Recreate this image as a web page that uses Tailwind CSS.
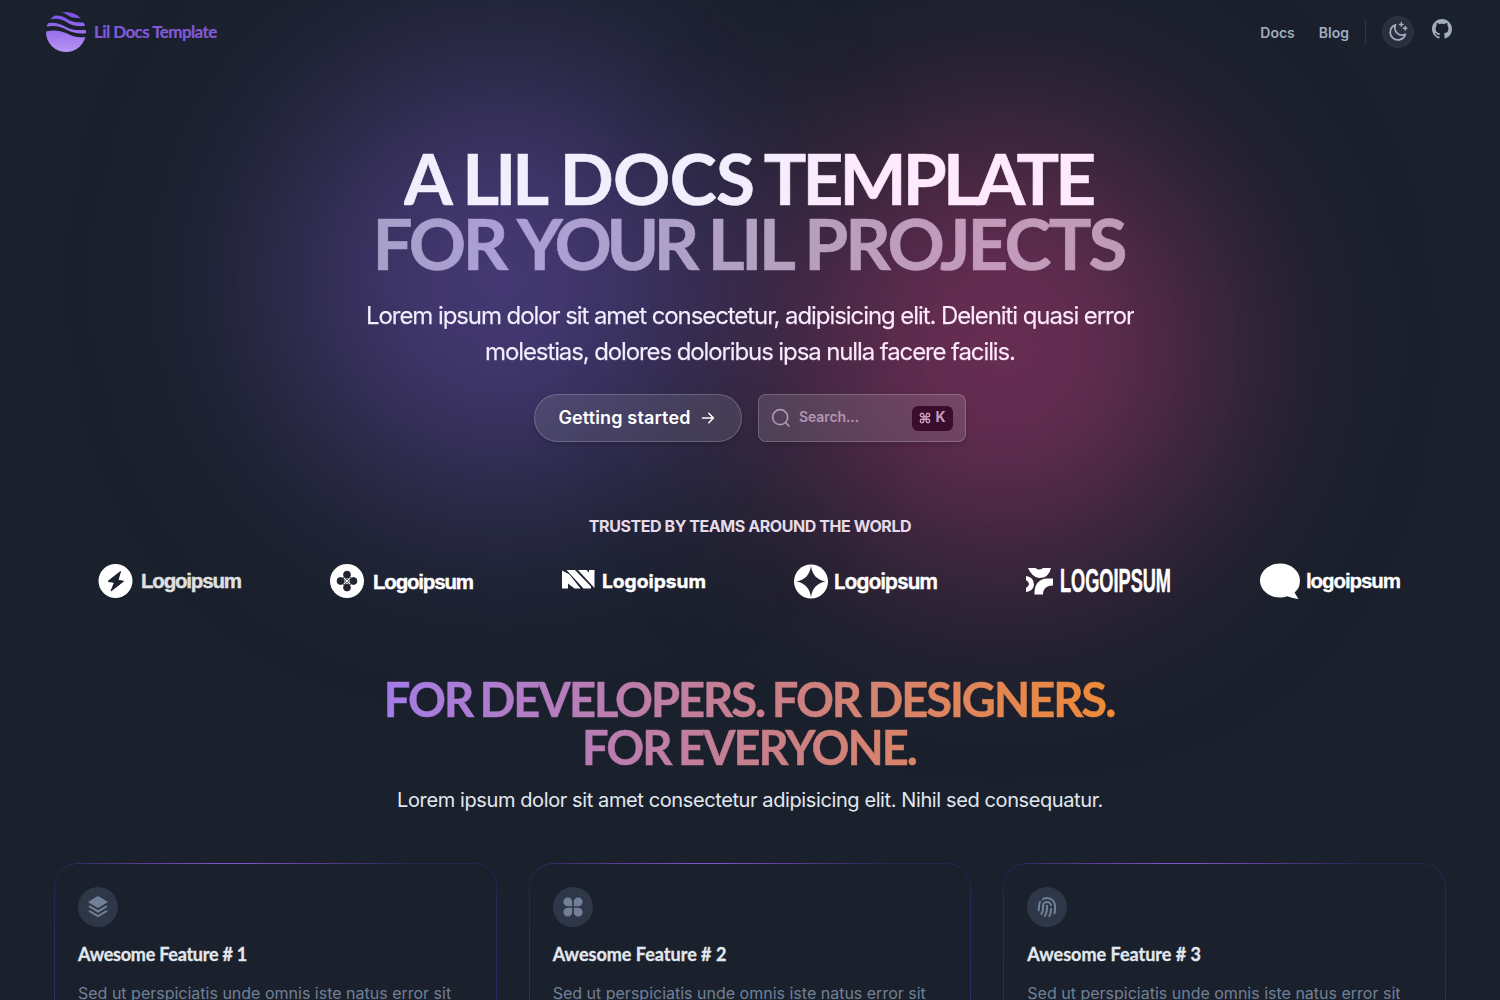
<!DOCTYPE html>
<html lang="en">
<head>
<meta charset="utf-8">
<title>Lil Docs Template</title>
<script src="https://cdn.jsdelivr.net/npm/@tailwindcss/browser@4"></script>
</head>
<body class="h-[1000px] overflow-hidden bg-[#1a202c] font-[Inter,sans-serif] text-[#e2e8f0]">
<div class="relative h-[1000px] overflow-hidden">
  <div class="absolute left-[285px] top-[65px] size-[430px] rounded-full bg-[#805ad5]/44 blur-[102px]"></div>
  <div class="absolute left-[788px] top-[133px] size-[430px] rounded-full bg-[#d53f8c]/44 blur-[102px]"></div>

  <div class="relative flex flex-col">
    <header class="flex h-16 items-center justify-between pl-[46px] pr-12">
      <a class="flex items-center gap-2">
        <svg class="size-10" viewBox="0 0 40 40">
          <defs>
            <linearGradient id="brand" x1="0" y1="0" x2="0" y2="1" gradientUnits="objectBoundingBox"><stop offset="0" stop-color="#7c50e6"/><stop offset="1" stop-color="#b794f4"/></linearGradient>
            <mask id="waves">
              <path fill="#fff" d="M15 .5C20 1 22 4.500 27 5.500Q30 6.300 36 6.300V-2H15z"/>
              <path fill="#fff" d="M3 4.300C12 2.500 17 4 22 7.500C27 10.500 32 10.500 40 10.500V14C32 14.500 27 14 22 11C17 7.500 12 5.500 3 7.500z"/>
              <path fill="#fff" d="M0 11.500C9 9.500 14 12 20 15C26 18.500 32 18.200 40 18V21.200C32 21.800 27 21 21 18C14 14.500 9 13 0 14.800z"/>
              <path fill="#fff" d="M0 19.500C8 17.500 14 18.500 20.700 21.300C27 24.500 32 26 40 25V40H0z"/>
            </mask>
          </defs>
          <circle cx="20" cy="20" r="20" fill="url(#brand)" mask="url(#waves)"/>
        </svg>
        <span class="whitespace-nowrap font-[Lato] text-[17px] font-bold tracking-[-0.58px] text-[#805ad5] [-webkit-text-stroke:0.2px_currentColor]">Lil Docs Template</span>
      </a>
      <nav class="flex items-center text-sm font-semibold text-[#a0aec0]">
        <a class="mr-6 mt-0.5">Docs</a>
        <a class="mr-4 mt-0.5">Blog</a>
        <span class="mr-4 h-6 w-px bg-[#2d3748]"></span>
        <button class="mr-[18px] flex size-8 items-center justify-center rounded-full border border-[#2d3748] bg-[#2b2f3d]">
          <svg class="size-5 shrink-0" viewBox="0 0 20 20" fill="none" stroke="#a0aec0" stroke-width="1.700" stroke-linecap="round" stroke-linejoin="round"><path d="M7.500 2.900A7.700 7.700 0 1 0 17.400 12.200A7.200 7.200 0 0 1 7.500 2.900z"/><path stroke-width="1.500" d="M13.300 .8v3.400M11.600 2.500h3.400M17.200 4.600v3.400M15.500 6.300h3.400"/></svg>
        </button>
        <svg class="-mt-1.5 size-5" viewBox="0 0 16 16" fill="#a0aec0"><path d="M8 0C3.580 0 0 3.580 0 8c0 3.540 2.290 6.530 5.470 7.590.4.070.55-.17.55-.38 0-.19-.01-.82-.01-1.490-2.010.37-2.530-.49-2.690-.94-.09-.23-.48-.94-.82-1.130-.28-.15-.68-.52-.01-.53.63-.01 1.080.58 1.230.82.72 1.210 1.870.87 2.330.66.07-.52.28-.87.51-1.070-1.780-.2-3.640-.89-3.640-3.950 0-.87.31-1.590.82-2.150-.08-.2-.36-1.020.08-2.120 0 0 .67-.21 2.200.82.64-.18 1.320-.27 2-.27s1.360.09 2 .27c1.530-1.040 2.200-.82 2.200-.82.44 1.100.16 1.920.08 2.120.51.56.82 1.270.82 2.150 0 3.070-1.870 3.750-3.650 3.950.29.25.54.73.54 1.480 0 1.070-.01 1.930-.01 2.200 0 .21.15.46.55.38A8.010 8.010 0 0 0 16 8c0-4.420-3.580-8-8-8z"/></svg>
      </nav>
    </header>

    <section class="flex flex-col items-center pt-[81px]">
      <h1 class="flex flex-col items-center whitespace-nowrap font-[Lato] text-[71px] font-bold leading-[65px] [-webkit-text-stroke:0.7px_transparent]">
        <span class="bg-[linear-gradient(90deg,#f3eefe_0%,#f3eefe_50%,#ffe9fd_66%)] bg-clip-text pr-[4px] tracking-[-2.74px] text-transparent">A <span class="tracking-[-4px]">LIL</span> <span class="tracking-[-0.7px]">DOCS</span> <span class="-ml-[5px] tracking-[-3.8px]">TEMPLATE</span></span>
        <span class="bg-[linear-gradient(90deg,#a8a0c8_0%,#ab9fd6_17%,#ada0cc_35%,#b3a1bf_52%,#c49abb_80%,#bf9bb8_100%)] bg-clip-text pr-[3px] tracking-[-3.4px] text-transparent">FOR <span class="-ml-0.5 tracking-[-5.4px]">YOUR</span> LIL <span class="tracking-[-2.8px]">PROJECTS</span></span>
      </h1>
      <p class="mt-[23px] flex flex-col items-center whitespace-nowrap bg-[linear-gradient(90deg,#f3eefe_45%,#ffe9fd_66%)] bg-clip-text text-2xl leading-9 tracking-[-1.08px] text-transparent [-webkit-text-stroke:0.25px_transparent]">
        <span>Lorem ipsum dolor sit amet consectetur, adipisicing elit. Deleniti quasi error</span>
        <span class="tracking-[-1.11px]">molestias, dolores doloribus ipsa nulla facere facilis.</span>
      </p>
      <div class="mt-6 flex gap-4">
        <button class="flex h-12 w-52 items-center justify-center gap-[9px] rounded-full border border-white/20 bg-white/10 pr-0.5 text-lg font-semibold text-white shadow-md">
          <span class="tracking-[0.15px]">Getting started</span>
          <svg class="size-4" viewBox="0 0 16 16" fill="none" stroke="currentColor" stroke-width="1.500" stroke-linecap="round" stroke-linejoin="round"><path d="M2.500 8h11M8.800 3.300L13.500 8l-4.700 4.700"/></svg>
        </button>
        <button class="flex h-12 w-52 items-center rounded-lg border border-white/20 bg-white/12 pl-3 pr-3 text-sm font-semibold text-[#b595b3] shadow-md">
          <svg class="mr-2 size-5" viewBox="0 0 24 24" fill="none" stroke="currentColor" stroke-width="2" stroke-linecap="round"><circle cx="11" cy="11" r="9"/><path d="M18 18L21.500 21.500"/></svg>
          <span class="-mt-0.5 tracking-[-0.1px]">Search...</span>
          <kbd class="ml-auto flex h-[25px] w-[41px] items-center justify-center gap-1 rounded-md bg-[#3b0d2d] font-[Inter] text-sm font-bold text-[#c79dbd]">
            <svg class="size-3" viewBox="0 0 24 24" fill="none" stroke="currentColor" stroke-width="2.800"><path d="M18 2.500a3.500 3.500 0 0 0-3.500 3.500v12a3.500 3.500 0 1 0 3.500-3.500H6A3.500 3.500 0 1 0 9.500 18V6A3.500 3.500 0 1 0 6 9.500h12a3.500 3.500 0 1 0 0-7z"/></svg>
            <span class="-mt-0.5">K</span>
          </kbd>
        </button>
      </div>

      <p class="mt-[72px] text-base font-bold leading-6 tracking-[-0.43px] text-[#e6dce9]">TRUSTED BY TEAMS AROUND THE WORLD</p>
      <div class="ml-[98px] mt-[22px] grid grid-cols-[repeat(6,232px)] self-start font-bold">
        <svg class="h-10 w-[150px]" viewBox="0 0 150 40" fill="#fff"><circle cx="17.500" cy="21" r="17"/><path fill="#1c2130" stroke="#1c2130" stroke-width="1" stroke-linejoin="round" d="M22.500 11.500L10 21.300l6.500 1.200-3.500 8.500L25.500 21.300l-5.500-1.100z"/><text x="43" y="28" fill="#e0e0e0" stroke="#e0e0e0" stroke-width=".4" font-family="Liberation Sans, sans-serif" font-size="20.500" textLength="101">Logoipsum</text></svg>
        <svg class="h-10 w-[150px]" viewBox="0 0 150 40" fill="#fff"><circle cx="17" cy="21" r="17"/><g fill="#20222f" stroke="#20222f"><circle cx="17" cy="14.600" r="3.400"/><circle cx="17" cy="27.600" r="3.400"/><circle cx="10.500" cy="21" r="3.400"/><circle cx="23.500" cy="21" r="3.400"/></g><path d="M13.300 17.300l7.400 7.400M20.700 17.300l-7.400 7.400" stroke="#20222f" stroke-width="2.400"/><path d="M13.800 17.800l6.400 6.400M20.200 17.800l-6.400 6.400" stroke="#fff" stroke-width="1.200"/><text x="43" y="29" stroke="#fff" stroke-width=".4" font-family="Liberation Sans, sans-serif" font-size="20.500" textLength="101">Logoipsum</text></svg>
        <svg class="h-10 w-[150px]" viewBox="0 0 150 40" fill="#fff"><path d="M0 10.500L7.500 14.500 18.500 28.500H12.500L6 23.500V28.500H0zM4.500 10H13L29 26.500V28.500H21.500zM16 10H24.500L27 12.500V10H32.500V28z"/><text x="40" y="28" stroke="#fff" stroke-width=".4" font-family="Inter, sans-serif" font-size="18.500" textLength="104" lengthAdjust="spacingAndGlyphs">Logoipsum</text></svg>
        <svg class="h-10 w-[150px]" viewBox="0 0 150 40" fill="#fff"><circle cx="17" cy="21.500" r="17"/><path fill="#272435" d="M17 6C18.500 15 22.500 19.500 31.500 21.500 22.500 23.500 18.500 28 17 37 15.500 28 11.500 23.500 2.500 21.500 11.500 19.500 15.500 15 17 6z"/><text x="40" y="29" stroke="#fff" stroke-width=".5" font-family="Inter, sans-serif" font-size="20.500" textLength="104" font-weight="600">Logoipsum</text></svg>
        <svg class="h-10 w-[150px]" viewBox="0 0 150 40" fill="#fff"><path d="M2 8H9.500Q13 11 17 8H25Q23 18 13 18Q6 17 2 8zM0 16Q8 17 8 25Q7 31 0 32V28Q3 26 3 24T0 20zM8.500 34.500V31Q10 19 21 18.500H27V25.500H26Q17 26 17 34.500z"/><text x="34" y="32" stroke="#fff" stroke-width=".5" font-family="Liberation Sans, sans-serif" font-size="33" textLength="111" lengthAdjust="spacingAndGlyphs">LOGOIPSUM</text></svg>
        <svg class="ml-0.5 h-10 w-[150px]" viewBox="0 0 150 40" fill="#fff"><path d="M20 3.500C31 3.500 40 11 40 20.500C40 26 38 30 34.500 32.500L38.500 39Q31 38 27.500 36.300Q24 37.500 20 37.500C9 37.500 0 30 0 20.500S9 3.500 20 3.500z"/><text x="46" y="28" stroke="#fff" stroke-width=".3" font-family="Liberation Sans, sans-serif" font-size="20.500" textLength="95">logoipsum</text></svg>
      </div>
    </section>

    <section class="flex flex-col items-center pt-[75px]">
      <h2 class="flex flex-col items-center whitespace-nowrap bg-[linear-gradient(90deg,#a47be8,#c97f8a_52%,#f08a36)] bg-clip-text font-[Lato] text-[47px] font-bold leading-[48px] tracking-[-2.02px] text-transparent [word-spacing:-2px] [-webkit-text-stroke:0.5px_transparent]">
        <span class="pr-0.5">FOR DEVELOPERS. FOR DESIGNERS.</span>
        <span class="pr-0.5">FOR EVERYONE.</span>
      </h2>
      <p class="mt-[14px] text-xl leading-[30px] tracking-[-0.395px]">Lorem ipsum dolor sit amet consectetur adipisicing elit. Nihil sed consequatur.</p>

      <div class="mt-12 grid w-[1392px] grid-cols-3 gap-8">
        <article class="rounded-3xl bg-[radial-gradient(180px_30px_at_40%_0,#805ad5,transparent),linear-gradient(#2a2250,#44307c)] p-px">
          <div class="flex h-[300px] flex-col items-start rounded-[23px] bg-[#1a202c] p-[23px]">
            <span class="flex size-10 items-center justify-center rounded-full bg-[#2d3748]"><svg class="size-6" viewBox="0 0 24 24" fill="#718096"><path d="M20.083 10.500l1.202.721a.5.5 0 0 1 0 .858L12 17.650l-9.285-5.571a.5.5 0 0 1 0-.858l1.202-.721L12 15.350l8.083-4.850zm0 4.700l1.202.721a.5.5 0 0 1 0 .858l-8.770 5.262a1 1 0 0 1-1.030 0l-8.770-5.262a.5.5 0 0 1 0-.858l1.202-.721L12 20.050l8.083-4.850zM12.514 1.309l8.771 5.262a.5.5 0 0 1 0 .858L12 13 2.715 7.430a.5.5 0 0 1 0-.858l8.770-5.262a1 1 0 0 1 1.030 0z"/></svg></span>
            <h3 class="mt-3 font-[Lato] text-lg font-bold leading-[30px] tracking-[-0.25px] [-webkit-text-stroke:0.3px_currentColor]">Awesome Feature # 1</h3>
            <p class="mt-3 whitespace-nowrap text-base text-[#718096]">Sed ut perspiciatis unde omnis iste natus error sit</p>
          </div>
        </article>
        <article class="rounded-3xl bg-[radial-gradient(180px_30px_at_40%_0,#805ad5,transparent),linear-gradient(#2a2250,#44307c)] p-px">
          <div class="flex h-[300px] flex-col items-start rounded-[23px] bg-[#1a202c] p-[23px]">
            <span class="flex size-10 items-center justify-center rounded-full bg-[#2d3748]"><svg class="size-6" viewBox="0 0 24 24" fill="#718096"><path d="M11.200 11.200H6.800A4.400 4.400 0 1 1 11.200 6.800zM12.800 11.200V6.800A4.400 4.400 0 1 1 17.200 11.200zM11.200 12.800V17.200A4.400 4.400 0 1 1 6.800 12.800zM12.800 12.800H17.200A4.400 4.400 0 1 1 12.800 17.200z"/></svg></span>
            <h3 class="mt-3 font-[Lato] text-lg font-bold leading-[30px] [-webkit-text-stroke:0.3px_currentColor]">Awesome Feature # 2</h3>
            <p class="mt-3 whitespace-nowrap text-base text-[#718096]">Sed ut perspiciatis unde omnis iste natus error sit</p>
          </div>
        </article>
        <article class="rounded-3xl bg-[radial-gradient(180px_30px_at_40%_0,#805ad5,transparent),linear-gradient(#2a2250,#44307c)] p-px">
          <div class="flex h-[300px] flex-col items-start rounded-[23px] bg-[#1a202c] p-[23px]">
            <span class="flex size-10 items-center justify-center rounded-full bg-[#2d3748]"><svg class="size-6" viewBox="0 0 24 24" fill="#718096"><path d="M17 13v1c0 2.770-.664 5.445-1.915 7.846l-.227.42-1.747-.974c1.160-2.080 1.810-4.410 1.882-6.836L15 14v-1h2zm-6-3h2v4l-.005.379a12.941 12.941 0 0 1-2.691 7.549l-.231.29-1.550-1.264a10.944 10.944 0 0 0 2.471-6.588L11 14v-4zm1-4a5 5 0 0 1 5 5h-2a3 3 0 0 0-6 0v3c0 2.235-.82 4.344-2.271 5.977l-.212.23-1.448-1.380a6.969 6.969 0 0 0 1.925-4.524L7 14v-3a5 5 0 0 1 5-5zm0-4a9 9 0 0 1 9 9v3c0 1.698-.202 3.370-.597 4.990l-.139.539-1.930-.526c.392-1.437.613-2.922.658-4.435L19 14v-3A7 7 0 0 0 7.808 5.394L6.383 3.968A8.962 8.962 0 0 1 12 2zM4.968 5.383l1.426 1.425a6.966 6.966 0 0 0-1.390 3.951L5 11 5.004 13c0 1.120-.264 2.203-.762 3.177l-.156.29-1.737-.992c.38-.665.602-1.407.646-2.183L3.004 13v-2a8.940 8.940 0 0 1 1.964-5.617z"/></svg></span>
            <h3 class="mt-3 font-[Lato] text-lg font-bold leading-[30px] [-webkit-text-stroke:0.3px_currentColor]">Awesome Feature # 3</h3>
            <p class="mt-3 whitespace-nowrap text-base text-[#718096]">Sed ut perspiciatis unde omnis iste natus error sit</p>
          </div>
        </article>
      </div>
    </section>
  </div>
</div>
</body>
</html>
